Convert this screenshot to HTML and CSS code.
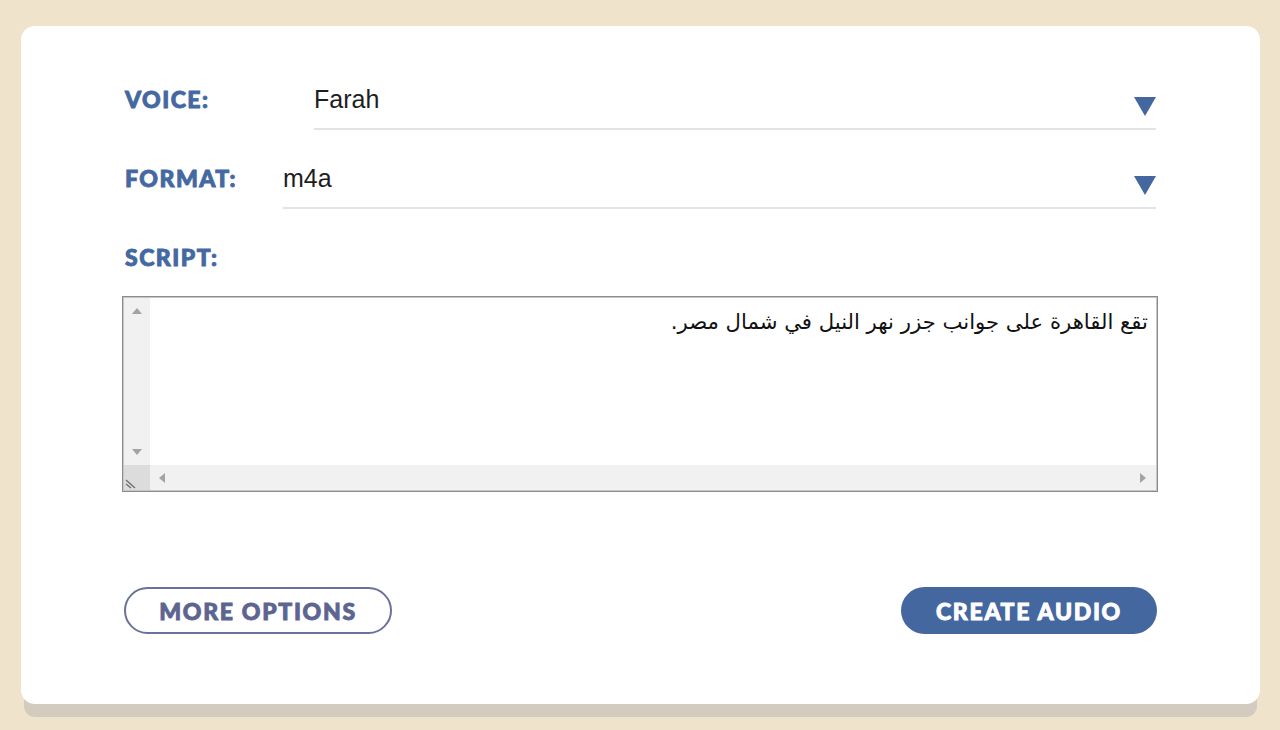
FILE: index.html
```html
<!DOCTYPE html>
<html lang="en">
<head>
<meta charset="utf-8">
<title>Create Audio</title>
<link rel="stylesheet" href="styles.css">
</head>
<body>
<div class="page">
  <div class="card">
    <div class="row">
      <div class="label label-voice">VOICE:</div>
      <div class="select">
        <span class="value">Farah</span>
        <svg class="arrow" width="22" height="19" viewBox="0 0 22 19"><path d="M0 0H22L11 19Z" fill="#4467a0"/></svg>
      </div>
    </div>
    <div class="row">
      <div class="label label-format">FORMAT:</div>
      <div class="select">
        <span class="value">m4a</span>
        <svg class="arrow" width="22" height="19" viewBox="0 0 22 19"><path d="M0 0H22L11 19Z" fill="#4467a0"/></svg>
      </div>
    </div>
    <div class="row row-script">
      <div class="label">SCRIPT:</div>
    </div>
    <div class="textarea">
      <div class="ta-main">
        <div class="vscroll">
          <svg width="10" height="6" viewBox="0 0 10 6"><path d="M0 6H10L5 0Z" fill="#a3a3a3"/></svg>
          <svg width="10" height="6" viewBox="0 0 10 6"><path d="M0 0H10L5 6Z" fill="#a3a3a3"/></svg>
        </div>
        <div class="ta-text" dir="rtl">تقع القاهرة على جوانب جزر نهر النيل في شمال مصر.</div>
      </div>
      <div class="hscroll">
        <div class="corner">
          <svg width="14" height="12" viewBox="0 0 14 12"><path d="M1 3L10 11M1 7L6 11" stroke="#6e6e6e" stroke-width="1.4"/></svg>
        </div>
        <div class="hbar">
          <svg width="6" height="10" viewBox="0 0 6 10"><path d="M6 0V10L0 5Z" fill="#a3a3a3"/></svg>
          <svg width="6" height="10" viewBox="0 0 6 10"><path d="M0 0V10L6 5Z" fill="#a3a3a3"/></svg>
        </div>
      </div>
    </div>
    <div class="actions">
      <button class="btn btn-outline">MORE OPTIONS</button>
      <button class="btn btn-primary">CREATE AUDIO</button>
    </div>
  </div>
</div>
</body>
</html>
```
FILE: styles.css
```css
html, body {
  margin: 0;
  padding: 0;
  background: #efe3cc;
}
.page {
  padding: 26px 20px 0 21px;
  height: 730px;
  box-sizing: border-box;
}
.card {
  background: #ffffff;
  border-radius: 14px;
  box-shadow: 0 16px 0 -3px #d3cbbf;
  padding: 50px 102px 70px 101px;
  height: 678px;
  box-sizing: border-box;
  display: flex;
  flex-direction: column;
}
.row {
  display: flex;
  align-items: flex-start;
  margin-bottom: 25px;
}
.label {
  font-family: Lato, "Open Sans", sans-serif;
  font-weight: 900;
  font-size: 23px;
  letter-spacing: 1.5px;
  line-height: 30px;
  color: #4468a1;
  -webkit-text-stroke: 0.9px #4468a1;
  padding-top: 8px;
  margin-left: 3px;
  flex: none;
}
.label-voice { width: 189px; }
.label-format { width: 158px; }
.select {
  flex: 1;
  display: flex;
  justify-content: space-between;
  align-items: flex-start;
  padding: 8px 0 12px;
  margin-right: 2px;
  border-bottom: 2px solid #e3e3e3;
}
.value {
  font-family: "Liberation Sans", Arial, sans-serif;
  font-size: 25px;
  line-height: 30px;
  color: #1e1e1e;
}
.arrow {
  margin-top: 13px;
  display: block;
}
.row-script {
  margin-bottom: 24px;
}
.textarea {
  height: 196px;
  box-sizing: border-box;
  border: 1px solid #8c8c8c;
  box-shadow: inset 0 0 0 1px #c6c6c6;
  padding: 1px;
  display: flex;
  flex-direction: column;
}
.ta-main {
  flex: 1;
  display: flex;
  min-height: 0;
}
.vscroll {
  width: 26px;
  background: #f1f1f1;
  display: flex;
  flex-direction: column;
  justify-content: space-between;
  align-items: center;
  padding: 10px 0 10px;
  box-sizing: border-box;
}
.vscroll svg { display: block; }
.ta-text {
  flex: 1;
  font-family: "DejaVu Sans", "Noto Sans", sans-serif;
  font-size: 21.2px;
  line-height: 28px;
  color: #111;
  padding: 10px 8px 0 0;
}
.hscroll {
  height: 25px;
  display: flex;
}
.corner {
  width: 26px;
  background: #dcdcdc;
  display: flex;
  align-items: flex-end;
  padding: 0 0 1px 1px;
  box-sizing: border-box;
}
.corner svg { display: block; }
.hbar {
  flex: 1;
  background: #f1f1f1;
  display: flex;
  justify-content: space-between;
  align-items: center;
  padding: 0 10px 0 9px;
}
.hbar svg { display: block; }
.actions {
  margin-top: auto;
  display: flex;
  justify-content: space-between;
  padding-left: 2px;
  padding-right: 1px;
}
.btn {
  height: 47px;
  border-radius: 24px;
  font-family: Lato, "Open Sans", sans-serif;
  font-weight: 900;
  font-size: 23px;
  letter-spacing: 1.7px;
  box-sizing: border-box;
  cursor: pointer;
  padding: 0;
}
.btn-outline {
  width: 268px;
  background: #ffffff;
  border: 2px solid #6b7199;
  color: #5c6590;
  -webkit-text-stroke: 0.9px #5c6590;
}
.btn-primary {
  width: 256px;
  background: #4467a0;
  border: none;
  color: #ffffff;
  -webkit-text-stroke: 0.9px #ffffff;
}
```
